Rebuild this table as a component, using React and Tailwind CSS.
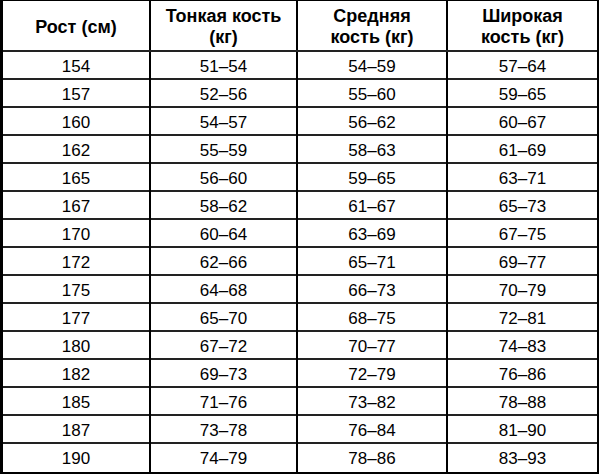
import React from 'react'

const rows = [
    ['154', '51–54', '54–59', '57–64'],
    ['157', '52–56', '55–60', '59–65'],
    ['160', '54–57', '56–62', '60–67'],
    ['162', '55–59', '58–63', '61–69'],
    ['165', '56–60', '59–65', '63–71'],
    ['167', '58–62', '61–67', '65–73'],
    ['170', '60–64', '63–69', '67–75'],
    ['172', '62–66', '65–71', '69–77'],
    ['175', '64–68', '66–73', '70–79'],
    ['177', '65–70', '68–75', '72–81'],
    ['180', '67–72', '70–77', '74–83'],
    ['182', '69–73', '72–79', '76–86'],
    ['185', '71–76', '73–82', '78–88'],
    ['187', '73–78', '76–84', '81–90'],
    ['190', '74–79', '78–86', '83–93'],
]

const App = () => {
    return (
        <div className="w-[600px] h-[474px] bg-white" style={{ fontFamily: '"Liberation Sans", Arial, sans-serif' }}>
            <div className="w-[599px] border-l-[3px] border-r-2 border-t border-b-[3px] border-black text-black">
                <div className="grid grid-cols-[148px_147px_150px_1fr] h-[51px] border-b-2 border-[#222] font-bold text-[18px] leading-[21px] text-center">
                    <div className="flex items-center justify-center pt-[3px] border-r-2 border-black">Рост (см)</div>
                    <div className="flex items-center justify-center pt-[3px] border-r-2 border-black">Тонкая кость<br />(кг)</div>
                    <div className="flex items-center justify-center pt-[3px] border-r-2 border-black">Средняя<br />кость (кг)</div>
                    <div className="flex items-center justify-center pt-[3px]">Широкая<br />кость (кг)</div>
                </div>
                {rows.map((r, i) => (
                    <div key={i} className={"grid grid-cols-[148px_147px_150px_1fr] h-[28px] text-[17px] text-center " + (i < rows.length - 1 ? 'border-b-2 border-[#222]' : '')}>
                        <div className="flex items-center justify-center pt-[2px] border-r-2 border-black">{r[0]}</div>
                        <div className="flex items-center justify-center pt-[2px] border-r-2 border-black">{r[1]}</div>
                        <div className="flex items-center justify-center pt-[2px] border-r-2 border-black">{r[2]}</div>
                        <div className="flex items-center justify-center pt-[2px]">{r[3]}</div>
                    </div>
                ))}
            </div>
        </div>
    )
}

export default App
